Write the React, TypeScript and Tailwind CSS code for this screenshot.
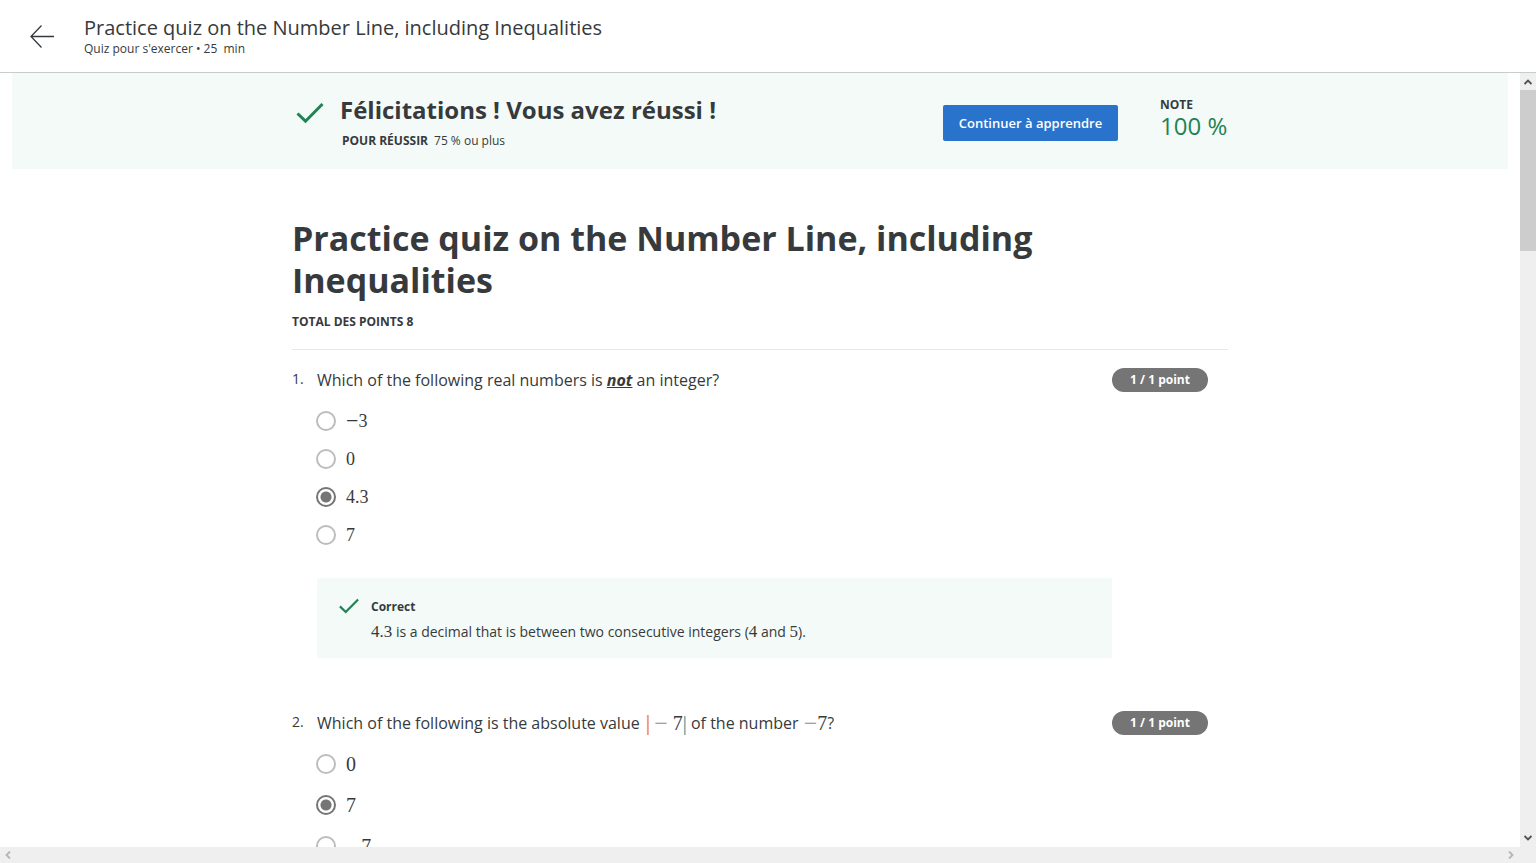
import React from "react";

const serif = "font-['Liberation_Serif',serif]";

function Check({ className }: { className: string }) {
  return (
    <svg viewBox="0 0 28 22" className={className} fill="none" stroke="#1f8354" strokeWidth="3" aria-hidden="true">
      <path d="M1.5 11.5 L9.5 19.2 L26.5 2" />
    </svg>
  );
}

function Num({ value, tall }: { value: string; tall?: boolean }) {
  const negative = value.startsWith("-");
  return (
    <span className={`${serif} inline-flex items-center`}>
      {negative && <span className={tall ? "pt-1 text-[27px] leading-5" : "text-[22px] leading-4"}>−</span>}
      {negative ? value.slice(1) : value}
    </span>
  );
}

function Option({ name, value, checked, tall }: { name: string; value: string; checked?: boolean; tall?: boolean }) {
  return (
    <label className={`flex items-center gap-[10px] ${tall ? "h-[41px] text-xl" : "h-[38px] text-lg"}`}>
      <input
        type="radio"
        name={name}
        defaultChecked={checked}
        className="size-5 shrink-0 appearance-none rounded-full border-2 border-[#bdbdbd] bg-white checked:border-[#757575] checked:bg-[radial-gradient(circle,#757575_5px,white_6px)]"
      />
      <Num value={value} tall={tall} />
    </label>
  );
}

function Question({ index, prompt, children }: { index: number; prompt: React.ReactNode; children: React.ReactNode }) {
  return (
    <section className="flex items-start">
      <span className="w-[25px] shrink-0 pt-px text-sm leading-5">{index}.</span>
      <div className="min-w-0 flex-1">
        <p className="flex h-6 items-center whitespace-pre text-base leading-6">{prompt}</p>
        {children}
      </div>
      <span className="mr-5 h-6 w-24 shrink-0 rounded-full bg-[#757575] text-center text-xs font-bold leading-6 text-white">
        1 / 1 point
      </span>
    </section>
  );
}

function Chevron({ d, color }: { d: string; color: string }) {
  return (
    <svg viewBox="0 0 8 8" className="size-2" fill="none" stroke={color} strokeWidth="1.8" aria-hidden="true">
      <path d={d} />
    </svg>
  );
}

export default function App() {
  return (
    <div className="flex h-screen flex-col overflow-hidden bg-white font-['Open_Sans',sans-serif] text-[#373a3c]">
      <header className="flex h-[73px] shrink-0 items-center border-b border-[#c7cccc]">
        <a href="#back" aria-label="Retour" className="ml-[29px] mr-[29px] block">
          <svg viewBox="0 0 26 26" className="size-[26px]" fill="none" stroke="#373a3c" strokeWidth="1.3" aria-hidden="true">
            <path d="M25 13.5 H2 M12.5 2.5 L2 13.5 L12.5 24.5" />
          </svg>
        </a>
        <div className="pt-px">
          <p className="text-xl leading-6">Practice quiz on the Number Line, including Inequalities</p>
          <p className="whitespace-pre text-xs leading-[18px]">Quiz pour s'exercer • 25  min</p>
        </div>
      </header>

      <div className="flex min-h-0 flex-1">
        <div className="flex min-w-0 flex-1 flex-col">
          <main className="min-h-0 flex-1 overflow-hidden">
            <div className="mx-3 h-24 bg-[#f3faf8]">
              <div className="mx-auto flex w-[936px] items-start">
                <Check className="ml-1 mt-[29px] h-[22px] w-7" />
                <div className="ml-4 pt-[21px]">
                  <h2 className="text-2xl font-bold leading-8">Félicitations ! Vous avez réussi !</h2>
                  <p className="ml-0.5 mt-1.5 text-xs leading-[18px]">
                    <strong className="mr-1.5">POUR RÉUSSIR</strong>75 % ou plus
                  </p>
                </div>
                <button
                  type="button"
                  className="ml-auto mr-[42px] mt-8 h-9 w-[175px] rounded-xs bg-[#2a73cc] pt-px text-[13px] font-semibold text-white"
                >
                  Continuer à apprendre
                </button>
                <div className="w-[68px] whitespace-nowrap pt-[23px]">
                  <p className="text-xs font-bold leading-[18px]">NOTE</p>
                  <p className="text-2xl leading-6 text-[#1f8354]">100 %</p>
                </div>
              </div>
            </div>

            <article className="mx-auto w-[936px] pt-12">
              <h1 className="max-w-[800px] text-[34px] font-bold leading-[42px]">
                Practice quiz on the Number Line, including Inequalities
              </h1>
              <p className="mt-3 text-xs font-bold leading-[18px]">TOTAL DES POINTS 8</p>
              <hr className="mb-[18px] mt-[18px] border-[#e8e8e8]" />

              <Question
                index={1}
                prompt={
                  <span>
                    Which of the following real numbers is <strong className="italic underline">not</strong> an integer?
                  </span>
                }
              >
                <div className="-ml-px pt-[10px]">
                  <Option name="q1" value="-3" />
                  <Option name="q1" value="0" />
                  <Option name="q1" value="4.3" checked />
                  <Option name="q1" value="7" />
                </div>
                <div className="mt-6 flex h-20 items-start bg-[#f3faf8] pl-[21px] pt-5">
                  <Check className="h-4 w-[22px]" />
                  <div className="ml-[11px] text-sm">
                    <p className="text-xs font-bold leading-[18px]">Correct</p>
                    <p className="mt-1.5 leading-5">
                      <span className={`${serif} text-[17px]`}>4.3</span> is a decimal that is between two consecutive integers (
                      <span className={`${serif} text-[17px]`}>4</span> and <span className={`${serif} text-[17px]`}>5</span>).
                    </p>
                  </div>
                </div>
              </Question>

              <div className="h-[53px]" />

              <Question
                index={2}
                prompt={
                  <>
                    <span>{"Which of the following is the absolute value "}</span>
                    <span className={`${serif} flex items-center pl-0.5 text-xl leading-5`}>
                      <span className="font-bold text-[#f08a45]">|</span>
                      <span className="ml-1 mr-[5px] text-2xl leading-5 text-[#8b8b8b]">−</span>
                      <span>7</span>
                      <span className="text-[#178f8f]">|</span>
                    </span>
                    <span>{" of the number "}</span>
                    <span className={`${serif} flex items-center pl-px text-xl leading-5`}>
                      <span className="text-2xl leading-5 text-[#8b8b8b]">−</span>7
                    </span>
                    <span>?</span>
                  </>
                }
              >
                <div className="-ml-px pt-2">
                  <Option name="q2" value="0" tall />
                  <Option name="q2" value="7" checked tall />
                  <Option name="q2" value="-7" tall />
                </div>
              </Question>
            </article>
          </main>
          <div className="flex h-4 shrink-0 items-center justify-between bg-[#efefef] pl-1 pr-[5px]">
            <Chevron d="M6 0.5 L2.5 4 L6 7.5" color="#b5b5b5" />
            <Chevron d="M2 0.5 L5.5 4 L2 7.5" color="#b5b5b5" />
          </div>
        </div>
        <div className="flex w-4 shrink-0 flex-col items-center bg-[#efefef]">
          <div className="flex h-[17px] items-center">
            <Chevron d="M0.5 6 L4 2.5 L7.5 6" color="#505050" />
          </div>
          <div className="h-[161px] w-full bg-[#cdcdcd]" />
          <div className="mb-[21px] mt-auto">
            <Chevron d="M0.5 2 L4 5.5 L7.5 2" color="#505050" />
          </div>
        </div>
      </div>
    </div>
  );
}
